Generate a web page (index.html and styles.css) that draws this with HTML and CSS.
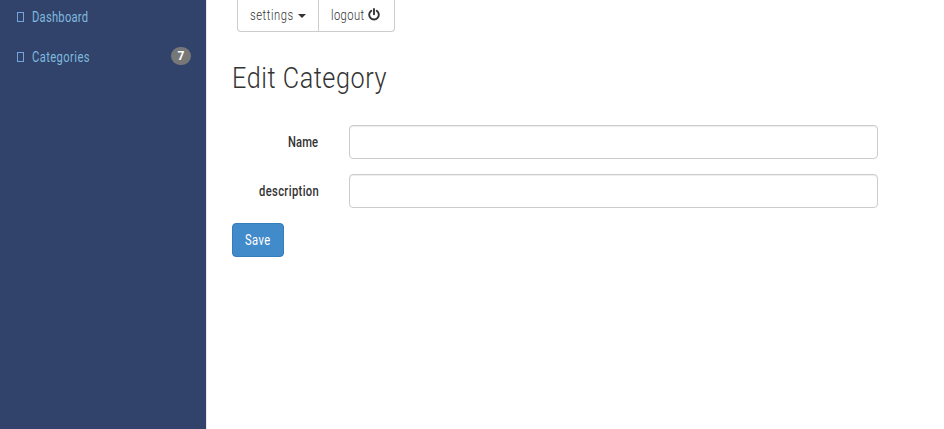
FILE: index.html
```html
<!DOCTYPE html>
<html lang="en">
<head>
<meta charset="utf-8">
<title>Edit Category</title>
<link rel="stylesheet" href="styles.css">
</head>
<body>
<div class="layout">
  <nav class="sidebar">
    <a class="nav-item"><i class="glyph-box"></i><span class="t t-dashboard">Dashboard</span></a>
    <a class="nav-item"><i class="glyph-box"></i><span class="t t-categories">Categories</span><span class="badge"><span>7</span></span></a>
  </nav>
  <main class="content">
    <div class="toolbar">
      <a class="tool tool-settings"><span class="t t-settings">settings</span><i class="caret"></i></a>
      <a class="tool tool-logout"><span class="t t-logout">logout</span><svg class="power" viewBox="0 0 12 13"><path d="M3.3 2.7A4.8 4.8 0 1 0 8.7 2.7M6 1V6.3" fill="none" stroke="#333" stroke-width="1.9" stroke-linecap="round"/></svg></a>
    </div>
    <h1><span class="t t-title">Edit Category</span></h1>
    <form class="form">
      <div class="row"><label for="name"><span class="t t-name">Name</span></label><input id="name" type="text"></div>
      <div class="row"><label for="description"><span class="t t-description">description</span></label><input id="description" type="text"></div>
      <button type="button"><span class="t t-save">Save</span></button>
    </form>
  </main>
</div>
</body>
</html>
```
FILE: styles.css
```css
* { box-sizing: border-box; }
body { margin: 0; background: #fff; color: #333; font: 14px/20px Roboto, sans-serif; overflow: hidden; }
.layout { display: flex; height: 429px; }
.sidebar { width: 207px; background: #31436b; border-right: 1px solid #e7e7e7; }
.nav-item { display: flex; align-items: center; height: 40px; padding: 0 15px 0 17px; color: #7fb9dd; }
.nav-item:first-child { height: 37px; padding-bottom: 3px; }
.glyph-box { width: 7px; height: 10px; margin-right: 8px; border: 1px solid #74a5df; }
.badge { display: flex; align-items: center; justify-content: center; width: 20px; height: 18px; margin: -2px 0 0 auto; border-radius: 10px; background: #777; color: #fff; font-size: 12px; font-weight: 700; line-height: 1; }

/* Condensed lettering: each label keeps its own width */
.t { display: block; white-space: nowrap; transform-origin: 0 50%; transform: scaleX(.8); }
.t-dashboard { width: 57px; letter-spacing: .3px; }
.t-categories { width: 58px; letter-spacing: .5px; }
.t-settings { width: 44px; font-weight: 300; letter-spacing: .7px; }
.t-logout { width: 33px; font-weight: 300; letter-spacing: .5px; }
.t-title { width: 154px; font-weight: 300; letter-spacing: .65px; transform: scaleX(.84); }
.t-name { width: 31px; font-weight: 500; letter-spacing: .1px; }
.t-description { width: 60px; font-weight: 500; letter-spacing: .45px; }
.t-save { width: 26px; letter-spacing: .5px; }

.content { flex: 1; padding-left: 25px; }
.toolbar { display: flex; width: 158px; height: 32px; margin-left: 5px; border: 1px solid #ccc; border-top: 0; border-radius: 0 0 4px 4px; }
.tool { display: flex; align-items: center; padding: 0 0 1px 12px; color: #333; }
.tool-settings { width: 81px; border-right: 1px solid #ccc; }
.caret { margin: 1px 0 0 4px; border: 4px solid transparent; border-top-color: #333; border-bottom: 0; }
.power { width: 12px; height: 13px; margin: -1px 0 0 4px; }
h1 { margin: 29px 0 31px; font-size: 30px; line-height: 33px; font-weight: 300; }
.row { display: flex; align-items: center; height: 34px; margin-bottom: 15px; }
label { display: flex; justify-content: flex-end; width: 87px; margin-right: 30px; }
input { width: 529px; height: 34px; border: 1px solid #ccc; border-radius: 4px; background: #fff; box-shadow: inset 0 1px 1px rgba(0,0,0,.075); }
button { display: block; width: 52px; height: 34px; padding: 0 12px; border: 1px solid #357ebd; border-radius: 4px; background: #428bca; color: #fff; font: inherit; }
```
